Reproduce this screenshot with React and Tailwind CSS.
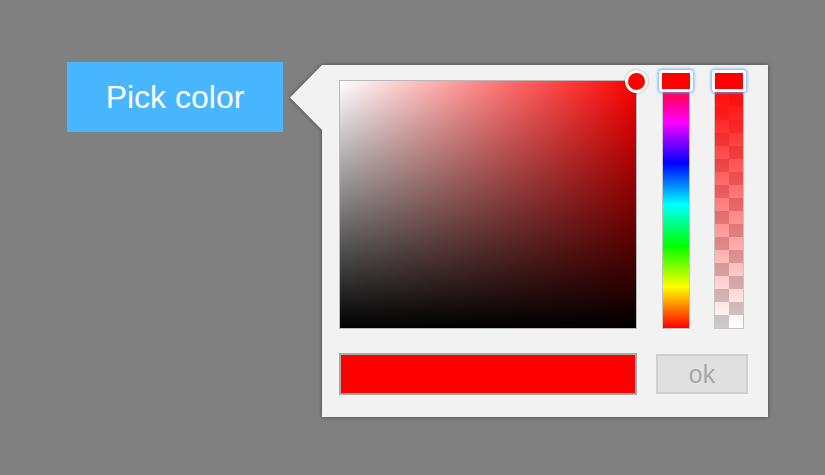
import React from 'react';

/**
 * Color picker popup (jscolor-like) next to a "Pick color" button
 */
const Handle = () => (
  <div className="absolute left-1/2 top-[-11px] -translate-x-1/2 w-[34px] h-[22px] rounded-[3px] border-[3px] border-white bg-[#ff0000] shadow-[0_0_3px_1px_rgba(90,170,255,0.9)]" />
);

const App = () => {
  return (
    <div className="w-full h-[475px] bg-[#808080] font-['Liberation_Sans',Arial,sans-serif] overflow-hidden">
      <div className="flex items-start pt-[62px] pl-[67px]">
        {/* Trigger button */}
        <button className="w-[216px] h-[70px] bg-[#47b6ff] text-white text-[32px] leading-none flex items-center justify-center">
          Pick color
        </button>

        {/* Popup */}
        <div className="flex items-start ml-[7px] mt-[3px] drop-shadow-[0_0_2px_rgba(0,0,0,0.45)]">
          {/* Arrow */}
          <svg width="32" height="65" viewBox="0 0 32 65" className="block">
            <polygon points="32,0 0,32.5 32,65" fill="#f2f2f2" />
          </svg>

          <div className="w-[446px] h-[352px] bg-[#f2f2f2] pl-[17px] pt-[15px]">
            <div className="flex items-start">
              {/* Saturation / value pad */}
              <div className="relative w-[298px] h-[249px] border border-[#b8b8b8] bg-[linear-gradient(to_top,#000,rgba(0,0,0,0)),linear-gradient(to_right,#fff,#f00)]">
                <div className="absolute right-[-12px] top-[-11px] w-[23px] h-[23px] rounded-full border-[3px] border-white bg-[#ff0000] shadow-[0_0_2px_rgba(0,0,0,0.4)]" />
              </div>

              {/* Hue slider */}
              <div className="relative ml-[25px] w-[28px] h-[249px] border border-[#c4c4c4] bg-[linear-gradient(to_bottom,#f00,#f0f,#00f,#0ff,#0f0,#ff0,#f00)]">
                <Handle />
              </div>

              {/* Alpha slider */}
              <div className="relative ml-[24px] w-[30px] h-[249px] border border-[#c4c4c4] bg-[conic-gradient(#ccc_25%,#fff_0_50%,#ccc_0_75%,#fff_0)] bg-[length:28px_26px] bg-bottom">
                <div className="absolute inset-0 bg-[linear-gradient(to_bottom,rgba(255,0,0,1),rgba(255,0,0,0))]" />
                <Handle />
              </div>
            </div>

            <div className="flex items-start mt-[24px]">
              {/* Preview */}
              <div className="w-[298px] h-[42px] border-2 border-[#a8a8a8] bg-[#ff0000]" />
              {/* OK button */}
              <button className="ml-[19px] mt-[1px] w-[92px] h-[40px] bg-[#e0e0e0] border-2 border-[#cfcfcf] text-[#a6a6a6] text-[25px] leading-none flex items-center justify-center">
                ok
              </button>
            </div>
          </div>
        </div>
      </div>
    </div>
  );
};

export default App;
